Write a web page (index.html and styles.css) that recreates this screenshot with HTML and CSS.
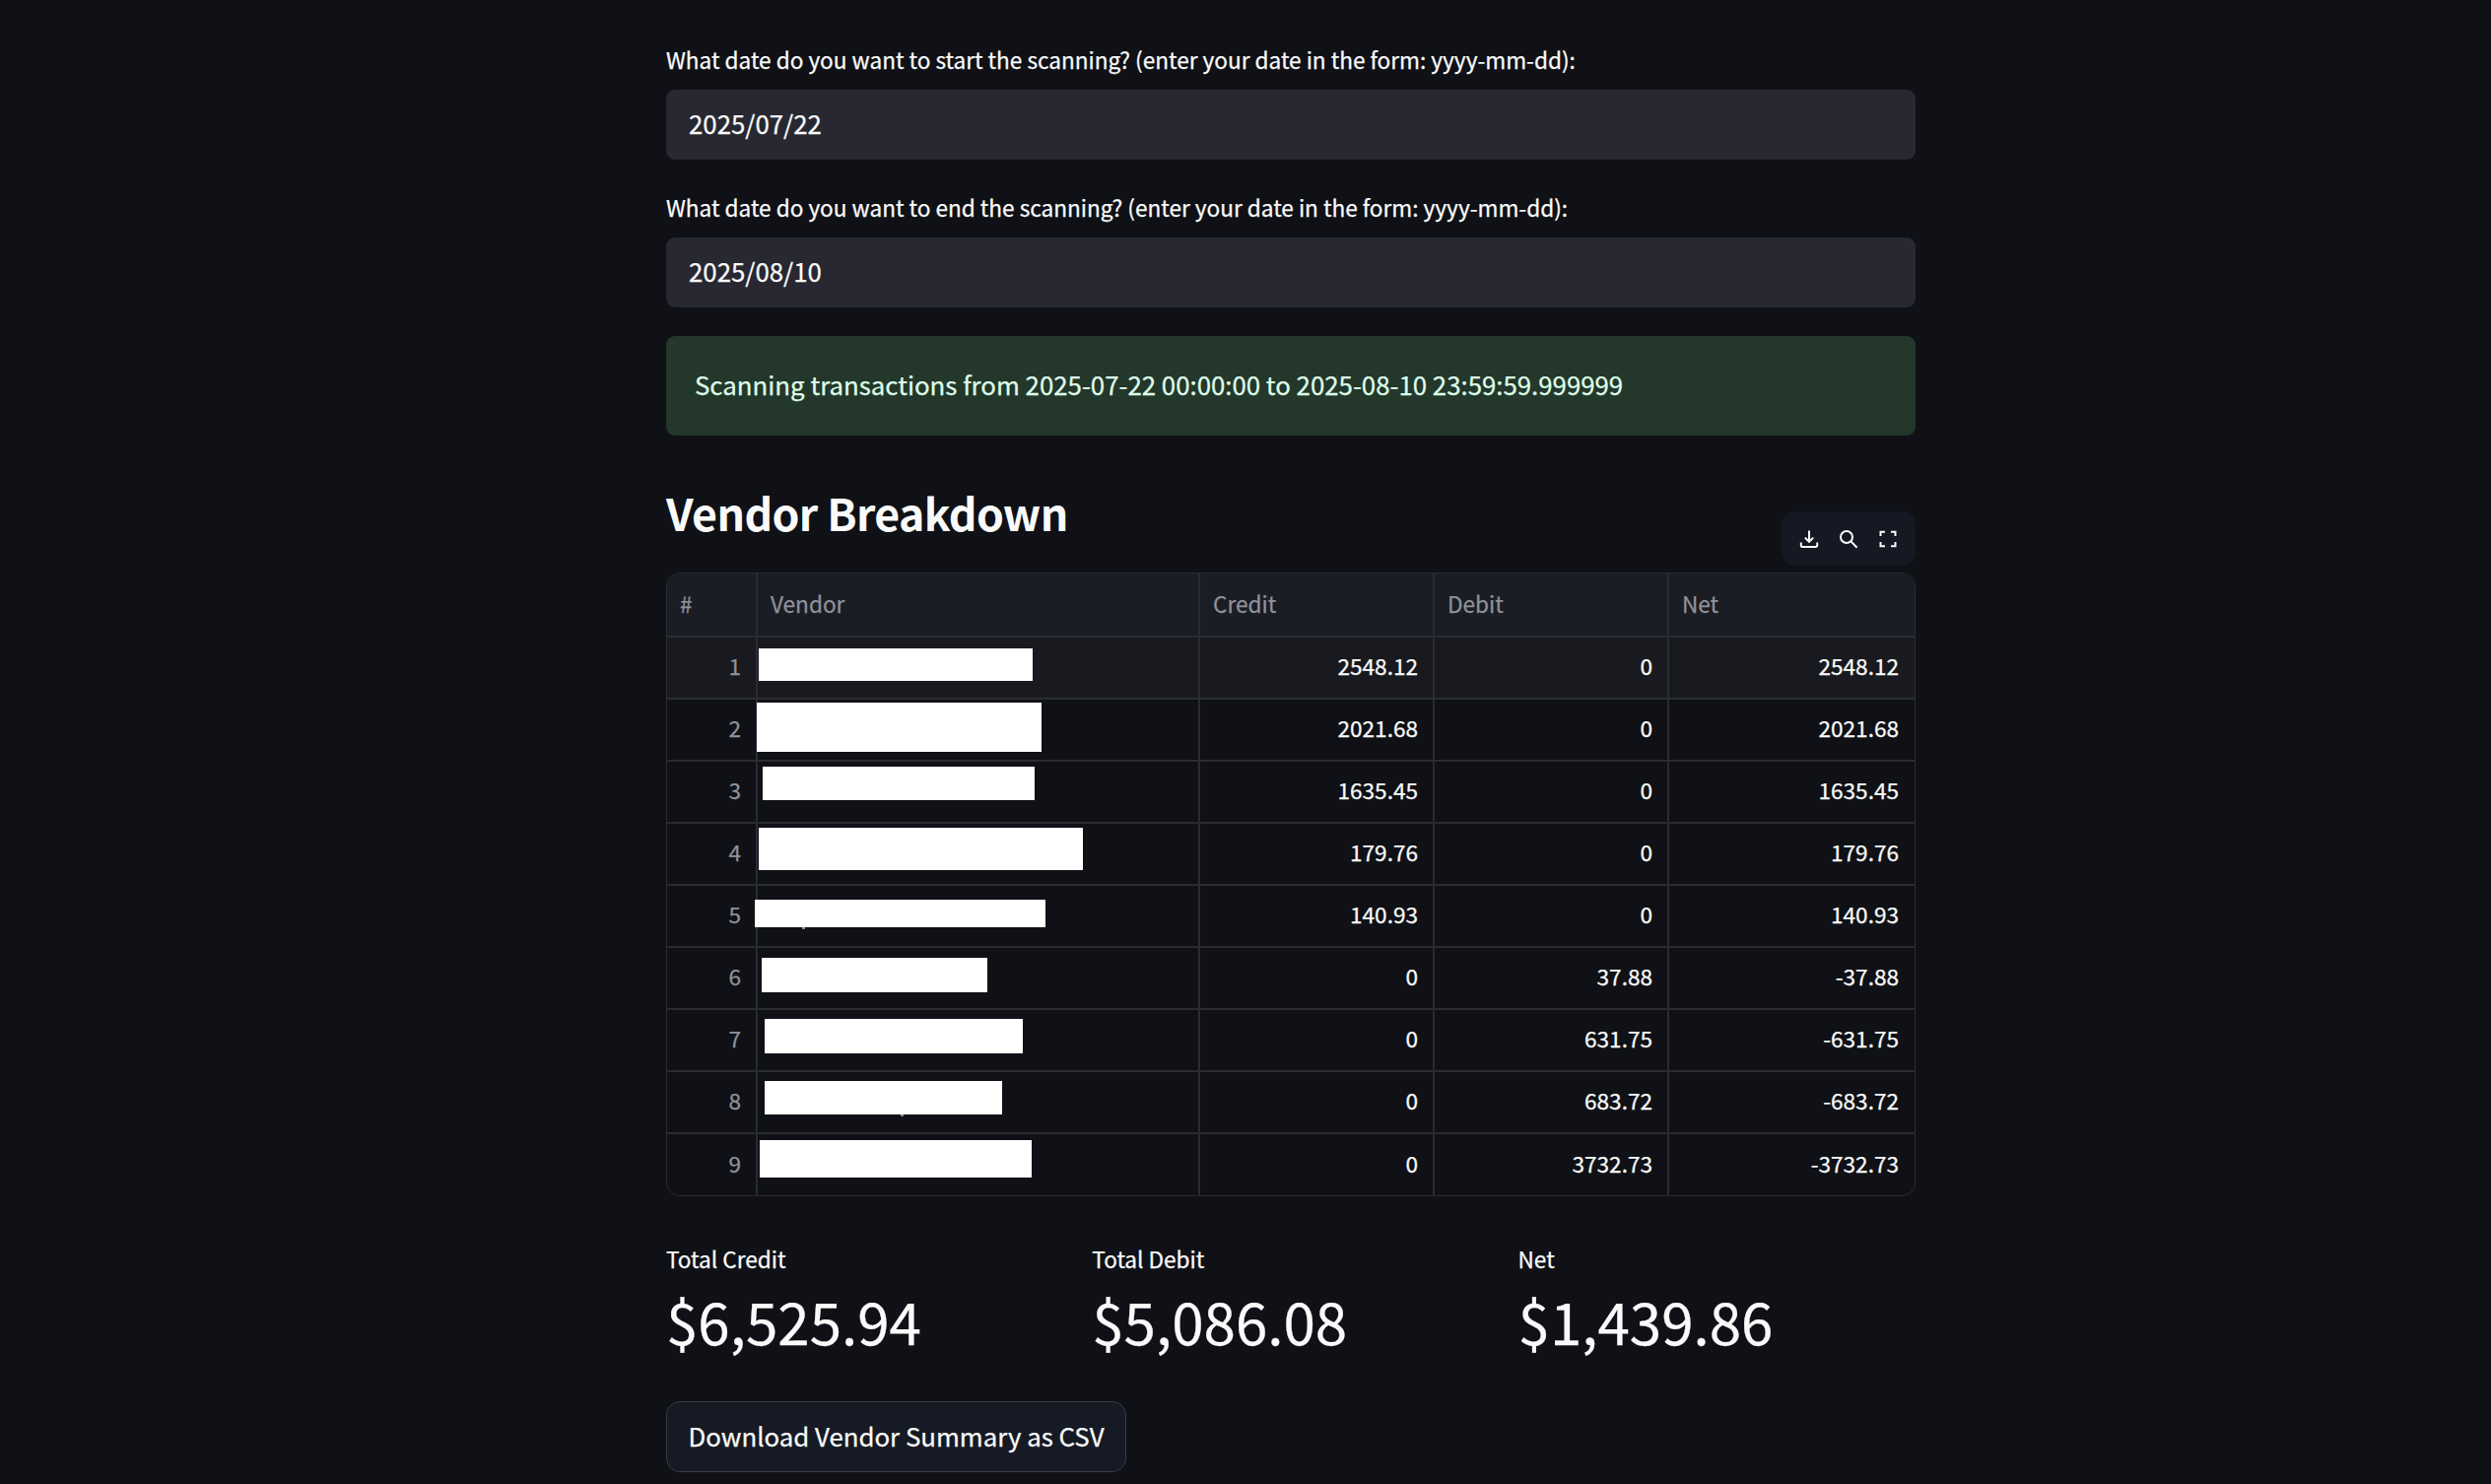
FILE: index.html
```html
<!DOCTYPE html>
<html lang="en">
<head>
  <meta charset="UTF-8">
  <title>Vendor Breakdown</title>
  <link rel="stylesheet" href="styles.css">
</head>
<body>
<div class="main">

  <div class="field">
    <label class="field-label">What date do you want to start the scanning? (enter your date in the form: yyyy-mm-dd):</label>
    <div class="input">2025/07/22</div>
  </div>

  <div class="field">
    <label class="field-label">What date do you want to end the scanning? (enter your date in the form: yyyy-mm-dd):</label>
    <div class="input">2025/08/10</div>
  </div>

  <div class="alert">Scanning transactions from 2025-07-22 00:00:00 to 2025-08-10 23:59:59.999999</div>

  <h2 class="heading">Vendor Breakdown</h2>

  <div class="table-wrap">
    <div class="toolbar">
      <svg class="icon" viewBox="0 0 20 20"><path d="M10 1.500v11M5.800 8.600l4.200 4.200 4.200-4.200M1.800 13.500v3a1.500 1.500 0 0 0 1.500 1.500h13.400a1.500 1.500 0 0 0 1.500-1.500v-3" /></svg>
      <svg class="icon" viewBox="0 0 20 20"><circle cx="8" cy="8" r="6" /><path d="M12.400 12.400l6.200 6.400" /></svg>
      <svg class="icon" viewBox="0 0 20 20"><path d="M2.500 7V2.800h4.500M13 2.800h4.500V7M17.500 13v4.200H13M7 17.200H2.500V13" /></svg>
    </div>

    <div class="table">
      <div class="cell head">#</div>
      <div class="cell head">Vendor</div>
      <div class="cell head">Credit</div>
      <div class="cell head">Debit</div>
      <div class="cell head last">Net</div>

      <div class="cell index hover">1</div>
      <div class="cell vendor hover"><span class="redact r1"></span></div>
      <div class="cell num hover">2548.12</div>
      <div class="cell num hover">0</div>
      <div class="cell num hover last">2548.12</div>

      <div class="cell index">2</div>
      <div class="cell vendor"><span class="redact r2"></span></div>
      <div class="cell num">2021.68</div>
      <div class="cell num">0</div>
      <div class="cell num last">2021.68</div>

      <div class="cell index">3</div>
      <div class="cell vendor"><span class="redact r3"></span></div>
      <div class="cell num">1635.45</div>
      <div class="cell num">0</div>
      <div class="cell num last">1635.45</div>

      <div class="cell index">4</div>
      <div class="cell vendor"><span class="redact r4"></span></div>
      <div class="cell num">179.76</div>
      <div class="cell num">0</div>
      <div class="cell num last">179.76</div>

      <div class="cell index">5</div>
      <div class="cell vendor"><span class="redact r5"></span><span class="speck s5"></span></div>
      <div class="cell num">140.93</div>
      <div class="cell num">0</div>
      <div class="cell num last">140.93</div>

      <div class="cell index">6</div>
      <div class="cell vendor"><span class="redact r6"></span></div>
      <div class="cell num">0</div>
      <div class="cell num">37.88</div>
      <div class="cell num last">-37.88</div>

      <div class="cell index">7</div>
      <div class="cell vendor"><span class="redact r7"></span></div>
      <div class="cell num">0</div>
      <div class="cell num">631.75</div>
      <div class="cell num last">-631.75</div>

      <div class="cell index">8</div>
      <div class="cell vendor"><span class="redact r8"></span><span class="speck s8"></span></div>
      <div class="cell num">0</div>
      <div class="cell num">683.72</div>
      <div class="cell num last">-683.72</div>

      <div class="cell index bottom">9</div>
      <div class="cell vendor bottom"><span class="redact r9"></span></div>
      <div class="cell num bottom">0</div>
      <div class="cell num bottom">3732.73</div>
      <div class="cell num bottom last">-3732.73</div>
    </div>
  </div>

  <div class="metrics">
    <div class="metric">
      <div class="metric-label">Total Credit</div>
      <div class="metric-value">$6,525.94</div>
    </div>
    <div class="metric">
      <div class="metric-label">Total Debit</div>
      <div class="metric-value">$5,086.08</div>
    </div>
    <div class="metric">
      <div class="metric-label">Net</div>
      <div class="metric-value">$1,439.86</div>
    </div>
  </div>

  <button class="download">Download Vendor Summary as CSV</button>

</div>
</body>
</html>
```

FILE: styles.css
```css
body {
  margin: 0;
  background-color: #0f1116;
  color: #fafafa;
  font-family: "Noto Sans CJK SC", "Noto Sans", sans-serif;
  -webkit-text-stroke: 0.25px;
}

.main {
  width: 1268px;
  margin-left: 676px;
  padding-top: 41px;
}

.field {
  margin-bottom: 29px;
}

.field-label {
  display: block;
  padding-top: 2px;
  margin-bottom: 12px;
  font-size: 22.6px;
  line-height: 36px;
}

.input {
  height: 71px;
  line-height: 68px;
  padding-left: 23px;
  background-color: #272831;
  border-radius: 9px;
  font-size: 25.8px;
}

.alert {
  height: 101px;
  line-height: 98px;
  padding-left: 29px;
  background-color: #24372b;
  color: #dffde9;
  border-radius: 9px;
  font-size: 25.8px;
}

.heading {
  margin: 44px 0 27px;
  font-size: 44.6px;
  font-weight: 600;
  letter-spacing: -0.6px;
  line-height: 68px;
  -webkit-text-stroke: 0;
}

.table-wrap {
  position: relative;
}

.toolbar {
  position: absolute;
  top: -62px;
  right: 0;
  display: flex;
  gap: 20px;
  align-items: center;
  height: 55px;
  padding: 0 18px;
  background-color: #161923;
  border-radius: 14px;
}

.icon {
  width: 20px;
  height: 20px;
  fill: none;
  stroke: #fafafa;
  stroke-width: 2;
}

.table {
  display: grid;
  grid-template-columns: 92px 449px 238px 238px 1fr;
  grid-template-rows: 65px repeat(8, 63px) 62px;
  border: 1px solid #2a2c32;
  border-radius: 14px;
  overflow: hidden;
  font-size: 22.6px;
}

.cell {
  display: flex;
  align-items: center;
  padding: 0 15px 5px;
  border-right: 2px solid #2a2c32;
  border-bottom: 2px solid #2a2c32;
  box-sizing: border-box;
}

.head {
  padding-left: 13px;
  padding-bottom: 2px;
  background-color: #1a1d24;
  color: #90929a;
}

.index {
  justify-content: flex-end;
  color: #90929a;
}

.num {
  justify-content: flex-end;
}

.hover {
  background-color: #191a1f;
}

.last {
  padding-right: 16px;
  border-right: none;
}

.bottom {
  padding-bottom: 3px;
  border-bottom: none;
}

.vendor {
  position: relative;
}

.redact {
  position: absolute;
  background-color: #fff;
}

.r1 { left: 1px; top: 11px; width: 278px; height: 33px; }
.r2 { left: -1px; top: 3px; width: 289px; height: 50px; }
.r3 { left: 5px; top: 5px; width: 276px; height: 34px; }
.r4 { left: 1px; top: 4px; width: 329px; height: 43px; }
.r5 { left: -3px; top: 14px; width: 295px; height: 28px; }
.r6 { left: 4px; top: 10px; width: 229px; height: 35px; }
.r7 { left: 7px; top: 9px; width: 262px; height: 35px; }
.r8 { left: 7px; top: 9px; width: 241px; height: 34px; }
.r9 { left: 2px; top: 6px; width: 276px; height: 38px; }

/* descender bits sticking out under the white boxes */
.speck {
  position: absolute;
  width: 3px;
  height: 2px;
  background-color: #8a8c90;
}

.s5 { left: 45px; top: 42px; }
.s8 { left: 145px; top: 43px; }

.metrics {
  display: grid;
  grid-template-columns: repeat(3, 1fr);
  gap: 28.8px;
  margin-top: 46px;
}

.metric-label {
  font-size: 22.6px;
  line-height: 36px;
}

.metric-value {
  font-size: 58.3px;
  line-height: 88px;
}

.download {
  display: block;
  height: 72px;
  margin-top: 38px;
  padding: 0 21.5px 3px;
  background-color: #161a24;
  border: 1px solid #3a3c44;
  border-radius: 14px;
  color: #fafafa;
  font-family: inherit;
  font-size: 25.8px;
}
```
